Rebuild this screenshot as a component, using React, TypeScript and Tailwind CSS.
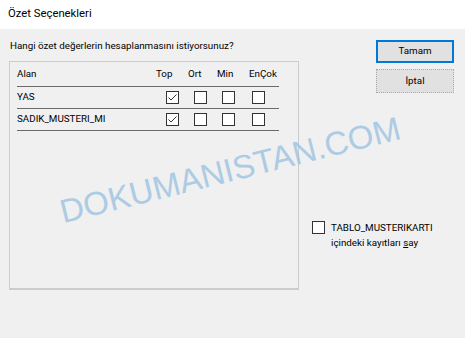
export default function App() {
  return (
    <div className="relative w-[465px] h-[338px] overflow-hidden bg-[#f0f0f0] text-black font-['Roboto',sans-serif] text-[9.8px]">
      <div className="h-[29px] bg-white pl-[8px] flex items-center text-[11.3px]">Özet Seçenekleri</div>

      <div className="flex">
        <div className="pl-[9px] pt-[10px]">
          <p className="pl-[1px] leading-[14px]">Hangi özet değerlerin hesaplanmasını istiyorsunuz?</p>
          <div className="mt-[8px] w-[290px] h-[229px] border border-[#cccccc] border-b-2 pl-[7px]">
            <div className="w-[262px]">
              <div className="flex items-center h-[25px] border-b border-[#6b6b6b]">
                <span className="w-[139px]">Alan</span>
                <span className="w-[32px]">Top</span>
                <span className="w-[29px]">Ort</span>
                <span className="w-[32px]">Min</span>
                <span>EnÇok</span>
              </div>
              <Row label="YAS" />
              <Row label="SADIK_MUSTERI_MI" />
            </div>
          </div>
        </div>

        <div className="flex-1 flex flex-col pl-[13px] pt-[11px] pr-[11px]">
          <div className="flex flex-col items-end gap-[6px]">
            <button className="w-[78px] h-[23px] bg-[#e1e1e1] border-2 border-[#0078d7]">Tamam</button>
            <button className="w-[78px] h-[24px] bg-[#e1e1e1] border border-dotted border-[#a9a9a9]">İptal</button>
          </div>
          <div className="mt-[128px] flex items-start gap-[6px]">
            <Box />
            <p className="-mt-[1px] leading-[15px]">
              TABLO_MUSTERIKARTI
              <br />
              içindeki kayıtları <u>s</u>ay
            </p>
          </div>
        </div>
      </div>

      <div className="absolute left-[230px] top-[170px] -translate-x-1/2 -translate-y-1/2 -rotate-[14deg] whitespace-nowrap font-['Liberation_Sans',sans-serif] text-[33px] text-[#9cc2e2] opacity-80 pointer-events-none">
        DOKUMANISTAN.COM
      </div>
    </div>
  );
}

function Row({ label }: { label: string }) {
  return (
    <div className="flex items-center h-[22px] border-b border-[#6b6b6b]">
      <span className="w-[149px]">{label}</span>
      <Box checked />
      <span className="ml-[15px]"><Box /></span>
      <span className="ml-[15px]"><Box /></span>
      <span className="ml-[17px]"><Box /></span>
    </div>
  );
}

function Box({ checked }: { checked?: boolean }) {
  return (
    <div className="w-[13px] h-[13px] border border-[#333333] bg-white flex items-center justify-center shrink-0">
      {checked && (
        <svg width="11" height="11" viewBox="0 0 11 11">
          <path d="M1.5 5.5 L4 8 L9.5 2.5" fill="none" stroke="#333" strokeWidth="1" />
        </svg>
      )}
    </div>
  );
}
